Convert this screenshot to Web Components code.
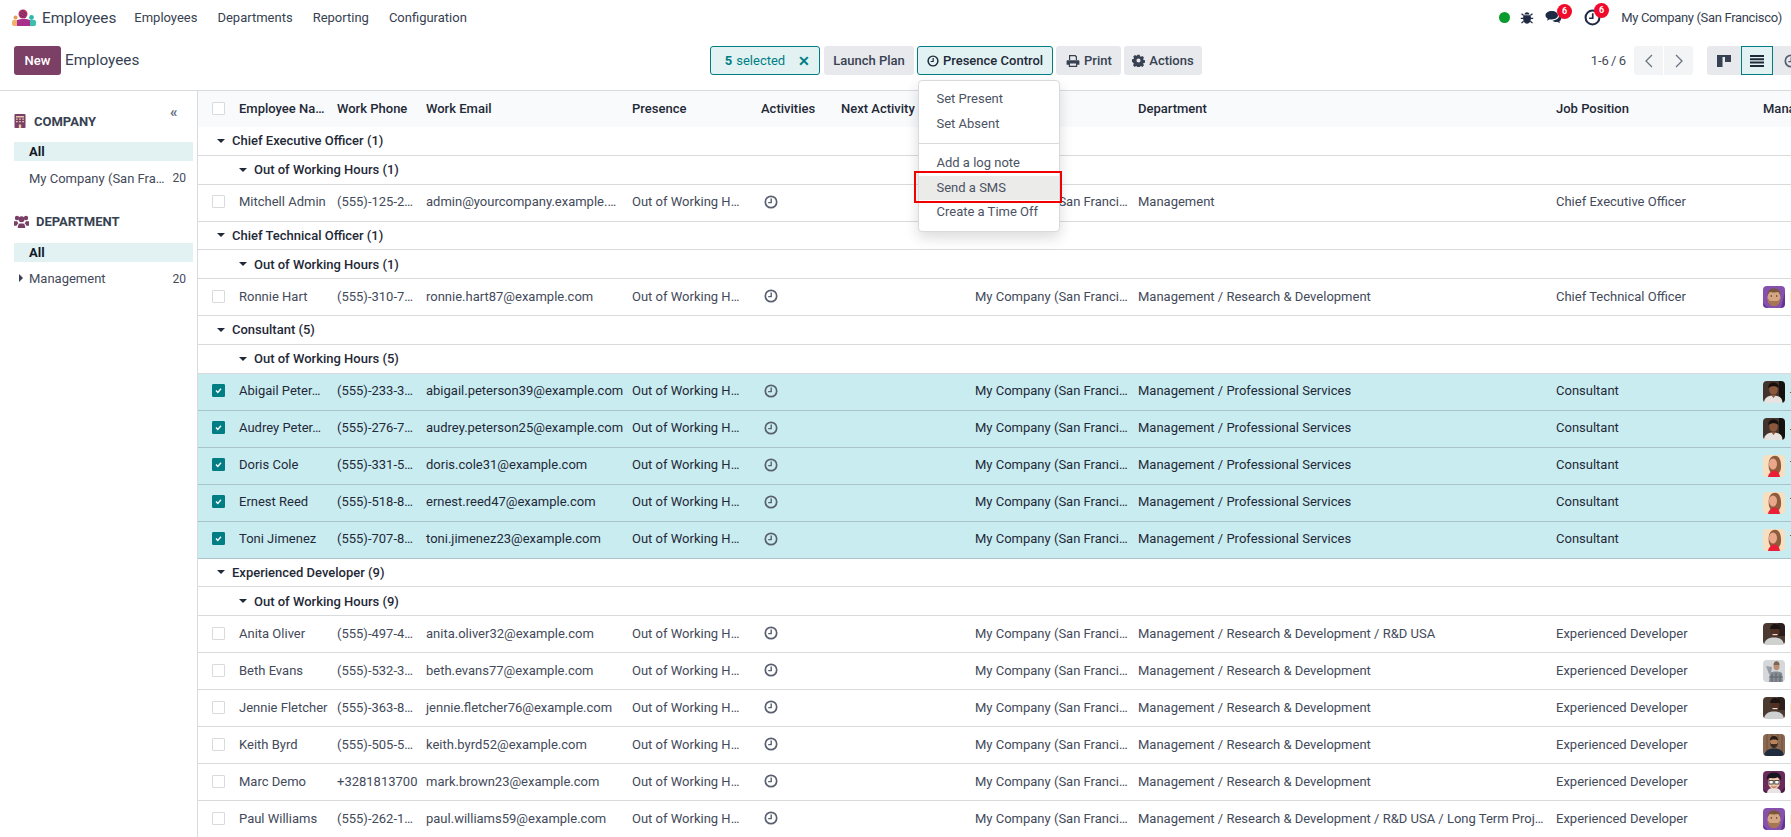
<!DOCTYPE html>
<html lang="en">
<head>
<meta charset="utf-8">
<title>Employees</title>
<style>
    html, body { margin: 0; height: 837px; overflow: hidden; background: #fff; }
    body {
        display: flex;
        flex-direction: column;
        font: 13px Roboto, "Noto Sans", "Liberation Sans", sans-serif;
        color: #434a5a;
        --teal: #017e84;
        --line: #d8dadd;
    }
</style>
</head>
<body>
<app-nav></app-nav>
<app-toolbar></app-toolbar>
<app-main></app-main>

<script>
const ICONS = {
    clock: `<svg viewBox="0 0 14 14" width="100%" height="100%"><circle cx="7" cy="7" r="5.7" fill="none" stroke="currentColor" stroke-width="1.7"/><path d="M7.2 3.4V7.6H4.2" fill="none" stroke="currentColor" stroke-width="1.4"/></svg>`,
    printer: `<svg viewBox="0 0 14 14" width="100%" height="100%"><path fill="currentColor" d="M3 1h6.5L11 2.5V6H9.8V3.2L8.9 2.2H4.2V6H3zM1.6 6.2h10.8c.6 0 1 .4 1 1v3.6h-2.2V13H2.8v-2.2H.6V7.2c0-.6.4-1 1-1zM4 9.4v2.4h6V9.4z"/></svg>`,
    gear: `<svg viewBox="0 0 14 14" width="100%" height="100%"><path fill="currentColor" fill-rule="evenodd" d="M5.7 .8h2.6l.3 1.7 1 .5 1.5-.9 1.8 1.8-.9 1.5.5 1 1.7.3v2.6l-1.7.3-.5 1 .9 1.5-1.8 1.8-1.5-.9-1 .5-.3 1.7H5.7l-.3-1.7-1-.5-1.5.9-1.8-1.8.9-1.5-.5-1L0 8.3V5.7l1.7-.3.5-1-.9-1.5 1.8-1.8 1.5.9 1-.5zM7 4.8a2.2 2.2 0 1 0 0 4.4 2.2 2.2 0 0 0 0-4.4z"/></svg>`,
    chat: `<svg viewBox="0 0 17 15" width="100%" height="100%"><path fill="currentColor" d="M6.8 1C3.2 1 .5 2.9.5 5.3c0 1.4.9 2.600 2.300 3.400L2 10.800l2.700-1.500c.7.100 1.400.2 2.100.2 3.500 0 6.200-1.900 6.200-4.200S10.300 1 6.800 1z"/><path fill="currentColor" d="M14 4.800c.1.200.1.400.1.600 0 2.700-3 4.900-6.700 5.100.9 1 2.400 1.600 4 1.600.5 0 .9 0 1.300-.1l2.300 1.300-.7-1.900c1.200-.7 1.900-1.700 1.900-2.900 0-1.500-.9-2.800-2.200-3.700z"/></svg>`,
    bug: `<svg viewBox="0 0 14 14" width="100%" height="100%"><path fill="currentColor" d="M4.500 3.400C4.700 2 5.700 1.200 7 1.200s2.300.8 2.500 2.200zM3.800 4.200h6.400c.5.700.8 1.600.8 2.800 0 3-1.600 5.600-4 5.800-2.400-.2-4-2.800-4-5.800 0-1.200.3-2.100.8-2.800z"/><path d="M1.500 2.700 3.700 4.500M12.500 2.700 10.300 4.500M.8 7.300H3M13.200 7.300H11M1.500 12 3.700 10.200M12.500 12 10.300 10.200" stroke="currentColor" stroke-width="1.200"/></svg>`,
    building: `<svg viewBox="0 0 12 14" width="100%" height="100%"><rect width="11" height="14" x=".5" rx=".8" fill="#7a3f66"/><g fill="#e8c9a8"><rect x="2" y="2" width="8" height="1.500"/><rect x="2" y="4.500" width="1.700" height="1.300"/><rect x="5.100" y="4.500" width="1.700" height="1.300"/><rect x="8.200" y="4.500" width="1.700" height="1.300"/><rect x="2" y="7" width="1.700" height="1.300"/><rect x="5.100" y="7" width="1.700" height="1.300"/><rect x="8.200" y="7" width="1.700" height="1.300"/><rect x="4.800" y="10.500" width="2.400" height="3.500"/></g></svg>`,
    users: `<svg viewBox="0 0 15 13" width="100%" height="100%"><g fill="#7a3f66"><circle cx="3" cy="3" r="2.200"/><circle cx="12" cy="3" r="2.200"/><circle cx="7.500" cy="4.200" r="3"/><path d="M0 6.300h3.200c.2 1 .7 1.700 1.300 2.200-1 .4-1.600 1.200-1.800 2.300H0zM15 6.300h-3.200c-.2 1-.7 1.700-1.300 2.200 1 .4 1.600 1.200 1.800 2.300H15z"/><path d="M3.800 13c-.1-2.300.6-4.400 2-4.600h3.400c1.400.2 2.100 2.300 2 4.600z"/></g></svg>`,
    kanban: `<svg viewBox="0 0 14 14" width="100%" height="100%"><path fill="#374151" d="M0 1h14v2H0zM0 3h5.500v10H0zM8 3h6v5H8z"/></svg>`,
    list: `<svg viewBox="0 0 14 12" width="100%" height="100%"><path fill="#1f2937" d="M0 0h14v2H0zM0 3.300h14v2H0zM0 6.600h14v2H0zM0 9.900h14v2H0z"/></svg>`
};

// small face pictures for the manager column
const FACES = {
    purple: `<rect width="22" height="22" fill="#8650ad"/><path d="M0 17l5 5H0zM22 6v16h-4z" fill="#5f3590"/><ellipse cx="11" cy="11.500" rx="6.500" ry="8.500" fill="#d4a684"/><path d="M4.800 12c0 5.500 2.700 8 6.200 8s6.200-2.500 6.200-8c-.8 2-1.800 3-3 3H7.800c-1.200 0-2.200-1-3-3z" fill="#a5764f"/><path d="M4.600 10C4 5 7 2.500 11 2.500s7 2.500 6.400 7.500c-.6-2-1.400-3.500-2.400-4-2 .6-6 .6-8 0-1 .5-1.800 2-2.400 4z" fill="#7a5738"/><circle cx="8.300" cy="10" r=".7" fill="#3a2a20"/><circle cx="13.700" cy="10" r=".7" fill="#3a2a20"/>`,
    man: `<rect width="22" height="22" fill="#43332d"/><rect x="16" width="6" height="22" fill="#15100e"/><ellipse cx="10.500" cy="8.500" rx="4.300" ry="5.300" fill="#8b583c"/><path d="M5.500 7C5 2.800 8 1.500 10.500 1.500S16 3 15.500 7C13.500 4.800 8 4.500 5.500 7z" fill="#16100d"/><path d="M1 22c0-5 3.500-7.500 9.500-7.500s9 2.500 9 7.500z" fill="#e6e3e0"/><path d="M8 14h5l-2.500 3z" fill="#8b583c"/>`,
    woman: `<rect width="22" height="22" fill="#f7dfc0"/><path d="M6 14C4.500 5 8 .8 12 .8c4.500 0 6.500 5 6 12-.2 3-1.500 5-3 6H8z" fill="#8e5c3c"/><ellipse cx="10" cy="9" rx="4" ry="5.500" fill="#e9a88c"/><path d="M5 22c.5-3.500 3-6 7-6.500 3 .500 4.500 3 5 6.500z" fill="#ea1f37"/>`,
    smile: `<rect width="22" height="22" fill="#4a3a32"/><rect x="15" width="7" height="13" fill="#2a1f1a"/><ellipse cx="12" cy="8.500" rx="4.500" ry="5.500" fill="#4f3022"/><path d="M7 6c.5-4 3-5 5-5s5 1 5 5z" fill="#1c1410"/><path d="M9.500 11h5v1.200h-5z" fill="#e8e0d8"/><path d="M1 22c.5-5 4-7.500 10-7.500s9.500 2.500 10 7.500z" fill="#cfd1d0"/>`,
    plaid: `<rect width="22" height="22" fill="#d5d7da"/><ellipse cx="13.500" cy="6.500" rx="3" ry="3.800" fill="#b88f72"/><path d="M10.500 5c0-3 1.800-3.800 3-3.800s3 .8 3 3.800z" fill="#7b6450"/><path d="M6 22l1-9c2-2 10-2 12 0l1 9z" fill="#868b94"/><path d="M3 6l6 1-1 7H6z" fill="#9a9da3"/><path d="M9 14v8M13 13v9M17 14v8M6 17h14" stroke="#5a5f68" stroke-width=".8"/>`,
    wood: `<rect width="22" height="22" fill="#8c6a52"/><path d="M4 0v22M9 0v6M15 0v6M19 0v22" stroke="#6e503c" stroke-width="1"/><ellipse cx="11" cy="8" rx="3.800" ry="4.800" fill="#b9835f"/><path d="M7 8c0 4 2 6 4 6s4-2 4-6l-1 2H8z" fill="#3f2c20"/><path d="M7 6.500C7 3 9 2 11 2s4 1 4 4.500C13 5 9 5 7 6.500z" fill="#2b1e16"/><path d="M1 22c.5-5 4-7.500 10-7.500s9.500 2.500 10 7.500z" fill="#1f2c3e"/>`,
    toon: `<rect width="22" height="22" fill="#6b2a5c"/><path d="M0 18l6 4H0zM22 16v6h-6z" fill="#4a1a40"/><path d="M4 22c.5-4 3-5 7-5s6.500 1 7 5z" fill="#e8e4e4"/><ellipse cx="11" cy="11.500" rx="6" ry="6.500" fill="#f2cba8"/><path d="M4 9C3 3 8 1 12 1.500c4 0 7 3 6 8-1-2-2-3-3-3.500-2 1.500-7 1.500-9 .8-1 .7-1.500 1.500-2 2.200z" fill="#16161e"/><rect x="6" y="9.500" width="4.200" height="3.500" fill="#fff" stroke="#2a2a30" stroke-width=".8"/><rect x="11.800" y="9.500" width="4.200" height="3.500" fill="#fff" stroke="#2a2a30" stroke-width=".8"/><path d="M8.500 15.500c1.500 1 3.500 1 5 0" stroke="#8a3a3a" fill="none" stroke-width=".8"/>`
};

class AppIcon extends HTMLElement {
    constructor() {
        super()
        const shadowRoot = this.attachShadow({ mode: 'open' })
        const w = this.getAttribute('w') || 14
        const h = this.getAttribute('h') || w
        shadowRoot.innerHTML = `
        <style>
            :host { display: inline-block; flex: none; width: ${w}px; height: ${h}px; line-height: 0; }
        </style>
        ${ICONS[this.getAttribute('name')]}
        `
    }
}
customElements.define('app-icon', AppIcon)

class EmpAvatar extends HTMLElement {
    constructor() {
        super()
        const shadowRoot = this.attachShadow({ mode: 'open' })
        shadowRoot.innerHTML = `
        <style>
            :host { display: block; flex: none; width: 22px; height: 22px; overflow: hidden; border-radius: 4px; }
            svg { display: block; filter: blur(.3px); }
        </style>
        <svg viewBox="0 0 22 22" width="22" height="22">${FACES[this.getAttribute('face')]}</svg>
        `
    }
}
customElements.define('emp-avatar', EmpAvatar)

class AppNav extends HTMLElement {
    constructor() {
        super()
        const shadowRoot = this.attachShadow({ mode: 'open' })
        shadowRoot.innerHTML = `
        <style>
            :host {
                display: flex;
                flex: none;
                align-items: center;
                height: 35px;
                padding: 0 9px 0 12px;
                margin-bottom: 11px;
                color: #374151;
            }
            .logo { flex: none; display: block; }
            .brand { font-size: 15.3px; margin: 0 18px 0 6px; }
            .menu { display: flex; gap: 20px; }
            .spacer { flex: 1; }
            .tray { display: flex; align-items: center; color: #1f2a44; }
            .dot { width: 11px; height: 11px; border-radius: 50%; background: #0a9b2c; }
            .bubble { position: relative; display: block; line-height: 0; }
            .count {
                position: absolute; top: -6px; right: -10px;
                width: 15px; height: 15px; border-radius: 50%;
                background: #f00a2c; color: #fff;
                font-size: 9px; font-weight: 700; line-height: 15px; text-align: center;
            }
            .act .count { right: -8px; }
            .bug { margin-left: 10px; }
            .chat { margin-left: 11px; }
            .act { margin-left: 22px; }
            .company { margin-left: 20px; white-space: nowrap; letter-spacing: -.33px; }
        </style>
        <svg class="logo" width="24" height="18" viewBox="0 0 24 18">
            <circle cx="11" cy="5" r="4.500" fill="#b5305e"/>
            <path d="M8 3l6 4M8 6l5 3M10 1l4 4" stroke="#5e2f80" stroke-width="1"/>
            <circle cx="3.500" cy="8.500" r="2" fill="#e89a5a"/>
            <circle cx="19.500" cy="8.500" r="2.400" fill="#2fb8a8"/>
            <path d="M0 13c0-1.500 1-2 2-2h6v6H2c-1 0-2-.5-2-2z" fill="#f2b26e"/>
            <path d="M24 13c0-1.500-1-2-2-2h-6v6h6c1 0 2-.5 2-2z" fill="#3dbfae"/>
            <path d="M5 11c3-1.500 11-1.500 13 0v6H5z" fill="#a8308c"/>
        </svg>
        <span class="brand">Employees</span>
        <nav class="menu">
            <span>Employees</span>
            <span>Departments</span>
            <span>Reporting</span>
            <span>Configuration</span>
        </nav>
        <span class="spacer"></span>
        <div class="tray">
            <span class="dot"></span>
            <app-icon class="bug" name="bug" w="14"></app-icon>
            <span class="bubble chat"><app-icon name="chat" w="17" h="15"></app-icon><span class="count">6</span></span>
            <span class="bubble act"><app-icon name="clock" w="17"></app-icon><span class="count">6</span></span>
        </div>
        <span class="company">My Company (San Francisco)</span>
        `
    }
}
customElements.define('app-nav', AppNav)

class ToolBtn extends HTMLElement {
    constructor() {
        super()
        const shadowRoot = this.attachShadow({ mode: 'open' })
        shadowRoot.innerHTML = `
        <style>
            :host {
                display: inline-flex;
                align-items: center;
                justify-content: center;
                gap: 4px;
                box-sizing: border-box;
                height: 29px;
                flex: none;
                border-radius: 3px;
                background: #e7e9ed;
                color: #374151;
                font-weight: 500;
                white-space: nowrap;
            }
            :host([active]) {
                background: #e2f2f3;
                border: 1px solid var(--teal);
                color: #1f2937;
            }
        </style>
        <slot></slot>
        `
    }
}
customElements.define('tool-btn', ToolBtn)

class ActionMenu extends HTMLElement {
    constructor() {
        super()
        const shadowRoot = this.attachShadow({ mode: 'open' })
        shadowRoot.innerHTML = `
        <style>
            :host {
                position: absolute;
                left: 917.5px;
                top: 34px;
                z-index: 5;
                box-sizing: border-box;
                width: 142.5px;
                height: 152px;
                padding: 6px 0;
                background: #fff;
                border: 1px solid #d8dadd;
                border-radius: 4px;
                box-shadow: 0 6px 14px rgba(0, 0, 0, .14);
                color: #4b5262;
            }
            .item { position: relative; height: 24.5px; padding-left: 18px; line-height: 24.5px; white-space: nowrap; }
            hr { border: 0; border-top: 1px solid #d8dadd; margin: 7px 0; }
            .hl { background: #ebebea; }
            .hl::after {
                content: '';
                position: absolute;
                left: -4.5px; right: -3px; top: -5px; bottom: -2.5px;
                border: 2.500px solid #f00000;
            }
        </style>
        <div class="item">Set Present</div>
        <div class="item">Set Absent</div>
        <hr>
        <div class="item">Add a log note</div>
        <div class="item hl">Send a SMS</div>
        <div class="item">Create a Time Off</div>
        `
    }
}
customElements.define('action-menu', ActionMenu)

class AppToolbar extends HTMLElement {
    constructor() {
        super()
        const shadowRoot = this.attachShadow({ mode: 'open' })
        shadowRoot.innerHTML = `
        <style>
            :host {
                position: relative;
                display: flex;
                flex: none;
                box-sizing: border-box;
                height: 45px;
                padding-left: 14px;
                border-bottom: 1px solid var(--line);
            }
            .bar { display: flex; align-items: flex-start; width: 100%; overflow: hidden; }
            .left { display: flex; align-items: center; width: 696px; flex: none; height: 29px; font-size: 15.3px; color: #374151; }
            .title { padding-bottom: 2px; }
            .new { display: flex; align-items: center; justify-content: center; width: 47px; height: 29px; margin-right: 4px; background: #7c3f66; color: #fff; border-radius: 3px; font-size: 13px; font-weight: 500; }
            .btns { display: flex; gap: 3px; }
            .sel { width: 110px; margin-right: 1px; padding-left: 5px; gap: 13px; font-weight: 400; color: var(--teal); }
            .sel b { font-weight: 700; margin-right: -9px; }
            .sel i { font-style: normal; font-weight: 700; font-size: 14px; }
            .plan { width: 90px; }
            .presence { width: 136px; }
            .print { width: 65px; justify-content: flex-start; padding-left: 10px; }
            .actions { width: 78px; }
            .spacer { flex: 1; }
            .pages { height: 29px; line-height: 29px; margin-right: 8px; white-space: nowrap; word-spacing: -1px; }
            .pager { display: flex; gap: 1px; margin-right: 14px; }
            .pager span { display: flex; align-items: center; justify-content: center; width: 29px; height: 29px; background: #f3f4f6; color: #6b7280; }
            .pager span:first-child { border-radius: 3px 0 0 3px; }
            .pager span:last-child { border-radius: 0 3px 3px 0; }
            .views { display: flex; width: 84px; flex: none; }
            .views span { display: flex; align-items: center; justify-content: center; box-sizing: border-box; flex: none; width: 34px; height: 29px; background: #e7e9ed; }
            .views span:first-child { border-radius: 3px 0 0 3px; }
            .views .on { width: 32px; background: #e2f2f3; border: 1px solid var(--teal); }
            .views .last { justify-content: flex-start; padding-left: 11px; color: #555f70; }
        </style>
        <div class="bar">
            <div class="left"><span class="new">New</span><span class="title">Employees</span></div>
            <div class="btns">
                <tool-btn class="sel" active><b>5</b> selected <i>✕</i></tool-btn>
                <tool-btn class="plan">Launch Plan</tool-btn>
                <tool-btn class="presence" active><app-icon name="clock" w="12"></app-icon>Presence Control</tool-btn>
                <tool-btn class="print"><app-icon name="printer" w="14"></app-icon>Print</tool-btn>
                <tool-btn class="actions"><app-icon name="gear" w="13"></app-icon>Actions</tool-btn>
            </div>
            <span class="spacer"></span>
            <span class="pages">1-6 / 6</span>
            <div class="pager">
                <span><svg width="10" height="14" viewBox="0 0 10 14"><path d="M8 1 2 7l6 6" fill="none" stroke="currentColor" stroke-width="1.300"/></svg></span>
                <span><svg width="10" height="14" viewBox="0 0 10 14"><path d="M2 1l6 6-6 6" fill="none" stroke="currentColor" stroke-width="1.300"/></svg></span>
            </div>
            <div class="views">
                <span><app-icon name="kanban" w="14"></app-icon></span>
                <span class="on"><app-icon name="list" w="14" h="12"></app-icon></span>
                <span class="last"><app-icon name="clock" w="14"></app-icon></span>
            </div>
        </div>
        <action-menu></action-menu>
        `
    }
}
customElements.define('app-toolbar', AppToolbar)

class FilterItem extends HTMLElement {
    constructor() {
        super()
        const shadowRoot = this.attachShadow({ mode: 'open' })
        const count = this.getAttribute('count')
        shadowRoot.innerHTML = `
        <style>
            :host { display: flex; align-items: center; height: 19px; padding: 0 7px 0 15px; position: relative; }
            :host([selected]) { background: #e2f1f2; color: #111827; font-weight: 700; }
            .count { margin-left: auto; font-size: 12px; }
            .caret { position: absolute; left: 5px; top: 5px; width: 0; height: 0; border-left: 4px solid #374151; border-top: 4px solid transparent; border-bottom: 4px solid transparent; }
        </style>
        ${this.hasAttribute('caret') ? '<span class="caret"></span>' : ''}
        <slot></slot>
        ${count ? `<span class="count">${count}</span>` : ''}
        `
    }
}
customElements.define('filter-item', FilterItem)

class FilterPanel extends HTMLElement {
    constructor() {
        super()
        const shadowRoot = this.attachShadow({ mode: 'open' })
        shadowRoot.innerHTML = `
        <style>
            :host {
                display: block;
                flex: none;
                box-sizing: border-box;
                width: 198px;
                padding: 23px 4px 0 14px;
                border-right: 1px solid var(--line);
                position: relative;
            }
            .fold { position: absolute; left: 170px; top: 13px; font-size: 15px; font-weight: 700; line-height: 16px; color: #5f6a80; }
            h3 { display: flex; align-items: center; margin: 0; height: 14px; font-size: 13px; font-weight: 700; color: #374151; }
            h3 app-icon { margin-right: 8px; }
            .dept { margin-top: 27px; }
            .dept app-icon { margin-right: 7px; }
            .items { margin-top: 14px; }
            .items filter-item + filter-item { margin-top: 7.5px; }
        </style>
        <span class="fold">«</span>
        <h3><app-icon name="building" w="12" h="14"></app-icon>COMPANY</h3>
        <div class="items">
            <filter-item selected>All</filter-item>
            <filter-item count="20">My Company (San Fra…</filter-item>
        </div>
        <h3 class="dept"><app-icon name="users" w="15" h="13"></app-icon>DEPARTMENT</h3>
        <div class="items">
            <filter-item selected>All</filter-item>
            <filter-item caret count="20">Management</filter-item>
        </div>
        `
    }
}
customElements.define('filter-panel', FilterPanel)

class CheckBox extends HTMLElement {
    constructor() {
        super()
        const shadowRoot = this.attachShadow({ mode: 'open' })
        shadowRoot.innerHTML = `
        <style>
            :host { display: block; box-sizing: border-box; width: 13px; height: 13px; border: 1px solid #d8dadd; border-radius: 1px; background: #fff; }
            :host([checked]) { border-color: var(--teal); background: var(--teal); }
            svg { display: block; }
        </style>
        ${this.hasAttribute('checked') ? '<svg viewBox="0 0 11 11" width="11" height="11"><path d="M3 5.600 4.800 7.400 8 3.800" fill="none" stroke="#fff" stroke-width="1.400"/></svg>' : ''}
        `
    }
}
customElements.define('check-box', CheckBox)

const ROW_STYLE = `
    :host {
        display: grid;
        grid-template-columns: 14px 27px 98px 89px 206px 129px 80px 134px 163px 418px 207px 200px;
        align-items: center;
        box-sizing: border-box;
        height: 37px;
        padding-bottom: 2px;
        border-bottom: 1px solid var(--line);
        white-space: nowrap;
    }
    :host([selected]) {
        background: #c9ecf1;
        border-bottom-color: #a9c3cb;
        color: #1f2937;
    }
    .mgr { display: flex; align-items: center; gap: 5px; align-self: start; margin-top: 7px; }
    .act { display: block; margin-left: 3px; color: #5a6070; }
`

class EmpRow extends HTMLElement {
    constructor() {
        super()
        const shadowRoot = this.attachShadow({ mode: 'open' })
        const a = (n) => this.getAttribute(n) || ''
        const sel = this.hasAttribute('selected')
        shadowRoot.innerHTML = `
        <style>${ROW_STYLE}</style>
        <span></span>
        <check-box ${sel ? 'checked' : ''}></check-box>
        <span>${a('name')}</span>
        <span>${a('phone')}</span>
        <span>${a('email')}</span>
        <span>Out of Working H…</span>
        <span><app-icon class="act" name="clock" w="14"></app-icon></span>
        <span></span>
        <span>My Company (San Franci…</span>
        <span>${a('dept')}</span>
        <span>${a('job')}</span>
        <span class="mgr">${a('face') ? `<emp-avatar face="${a('face')}"></emp-avatar>${a('mgr')}` : ''}</span>
        `
    }
}
customElements.define('emp-row', EmpRow)

class GroupRow extends HTMLElement {
    constructor() {
        super()
        const shadowRoot = this.attachShadow({ mode: 'open' })
        shadowRoot.innerHTML = `
        <style>
            :host {
                display: flex;
                align-items: center;
                box-sizing: border-box;
                height: 28.750px;
                padding-left: 19px;
                border-bottom: 1px solid var(--line);
                font-weight: 500;
                color: #1f2937;
                white-space: nowrap;
            }
            :host([sub]) { padding-left: 41px; }
            .caret { width: 0; height: 0; margin-right: 7px; border-top: 4px solid #1f2937; border-left: 4px solid transparent; border-right: 4px solid transparent; }
        </style>
        <span class="caret"></span><slot></slot>
        `
    }
}
customElements.define('group-row', GroupRow)

class EmpHead extends HTMLElement {
    constructor() {
        super()
        const shadowRoot = this.attachShadow({ mode: 'open' })
        shadowRoot.innerHTML = `
        <style>${ROW_STYLE}
            :host { height: 36px; padding-bottom: 1px; border-bottom: 0; background: #f9fafb; font-weight: 500; color: #1f2937; }
        </style>
        <span></span>
        <check-box></check-box>
        <span>Employee Na…</span><span>Work Phone</span><span>Work Email</span><span>Presence</span>
        <span>Activities</span><span>Next Activity</span><span>Company</span><span>Department</span>
        <span>Job Position</span><span>Manager</span>
        `
    }
}
customElements.define('emp-head', EmpHead)

const P = 'Management / Professional Services'
const R = 'Management / Research &amp; Development'
const SECTIONS = [
    ['Chief Executive Officer (1)', 'Out of Working Hours (1)', [
        ['Mitchell Admin', '(555)-125-2…', 'admin@yourcompany.example.…', 'Management', 'Chief Executive Officer', '', '']
    ]],
    ['Chief Technical Officer (1)', 'Out of Working Hours (1)', [
        ['Ronnie Hart', '(555)-310-7…', 'ronnie.hart87@example.com', R, 'Chief Technical Officer', 'purple', 'Mitchell Admin']
    ]],
    ['Consultant (5)', 'Out of Working Hours (5)', [
        ['Abigail Peter…', '(555)-233-3…', 'abigail.peterson39@example.com', P, 'Consultant', 'man', '- Jeffrey'],
        ['Audrey Peter…', '(555)-276-7…', 'audrey.peterson25@example.com', P, 'Consultant', 'man', '- Jeffrey'],
        ['Doris Cole', '(555)-331-5…', 'doris.cole31@example.com', P, 'Consultant', 'woman', 'Tina'],
        ['Ernest Reed', '(555)-518-8…', 'ernest.reed47@example.com', P, 'Consultant', 'woman', 'Tina'],
        ['Toni Jimenez', '(555)-707-8…', 'toni.jimenez23@example.com', P, 'Consultant', 'woman', 'Tina']
    ], true],
    ['Experienced Developer (9)', 'Out of Working Hours (9)', [
        ['Anita Oliver', '(555)-497-4…', 'anita.oliver32@example.com', R + ' / R&amp;D USA', 'Experienced Developer', 'smile', 'Keith'],
        ['Beth Evans', '(555)-532-3…', 'beth.evans77@example.com', R, 'Experienced Developer', 'plaid', 'Paul'],
        ['Jennie Fletcher', '(555)-363-8…', 'jennie.fletcher76@example.com', R, 'Experienced Developer', 'smile', 'Keith'],
        ['Keith Byrd', '(555)-505-5…', 'keith.byrd52@example.com', R, 'Experienced Developer', 'wood', 'Paul'],
        ['Marc Demo', '+3281813700', 'mark.brown23@example.com', R, 'Experienced Developer', 'toon', 'Marc'],
        ['Paul Williams', '(555)-262-1…', 'paul.williams59@example.com', R + ' / R&amp;D USA / Long Term Proj…', 'Experienced Developer', 'purple', 'Mitchell']
    ]]
]

class EmpList extends HTMLElement {
    constructor() {
        super()
        const shadowRoot = this.attachShadow({ mode: 'open' })
        const rows = SECTIONS.map(([title, sub, people, selected]) => `
            <group-row>${title}</group-row>
            <group-row sub>${sub}</group-row>
            ${people.map(p => `<emp-row ${selected ? 'selected' : ''} name="${p[0]}" phone="${p[1]}" email="${p[2]}" dept="${p[3]}" job="${p[4]}" face="${p[5]}" mgr="${p[6]}"></emp-row>`).join('')}
        `).join('')
        shadowRoot.innerHTML = `
        <style>
            :host { display: block; flex: 1; min-width: 0; overflow: hidden; }
        </style>
        <emp-head></emp-head>
        ${rows}
        `
    }
}
customElements.define('emp-list', EmpList)

class AppMain extends HTMLElement {
    constructor() {
        super()
        const shadowRoot = this.attachShadow({ mode: 'open' })
        shadowRoot.innerHTML = `
        <style>
            :host { display: flex; flex: 1; min-height: 0; overflow: hidden; }
        </style>
        <filter-panel></filter-panel>
        <emp-list></emp-list>
        `
    }
}
customElements.define('app-main', AppMain)
</script>
</body>
</html>
